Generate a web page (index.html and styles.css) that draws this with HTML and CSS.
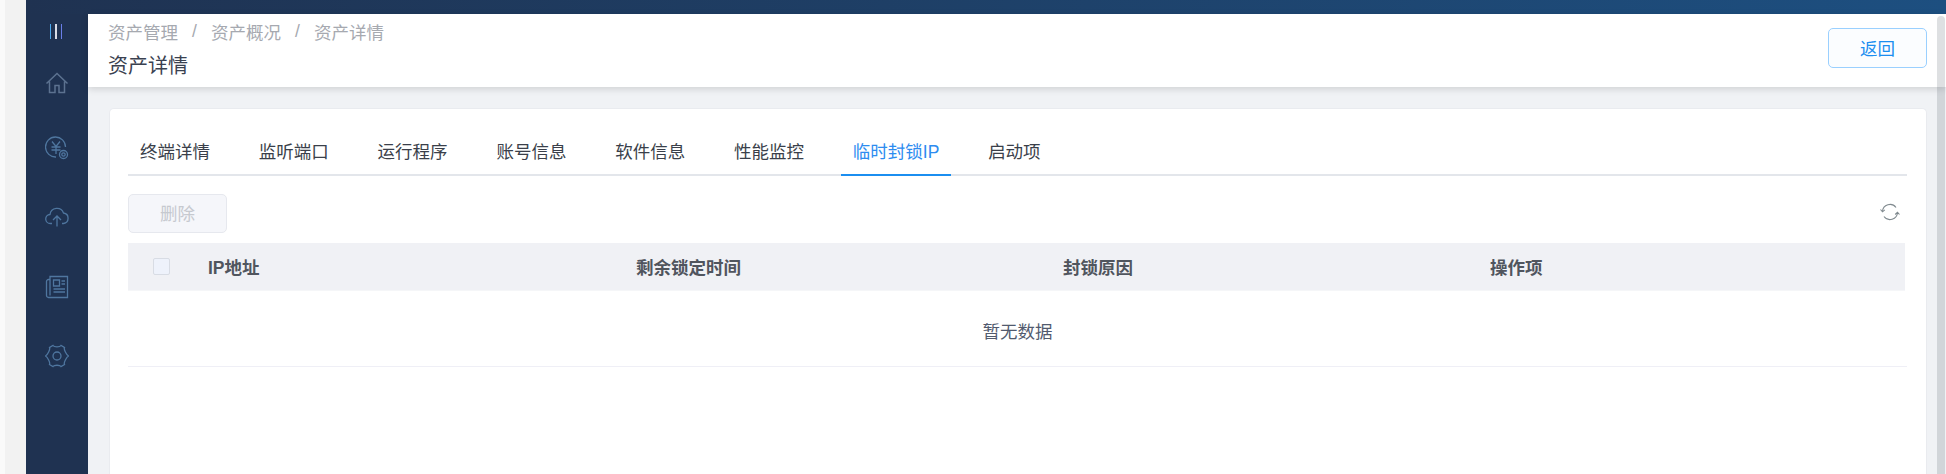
FILE: index.html
```html
<!DOCTYPE html>
<html lang="zh-CN">
<head>
<meta charset="utf-8">
<title>资产详情</title>
<link rel="stylesheet" href="styles.css">
</head>
<body>
<div class="shell">
  <div class="gutter"><div class="gutter-edge"></div><div class="gutter-fill"></div></div>
  <div class="frame">
    <div class="topbar"></div>
    <div class="workspace">
      <nav class="sidebar">
        <div class="menu-toggle"><span class="bar bar-a"></span><span class="bar bar-b"></span><span class="bar bar-c"></span></div>
        <div class="side-item side-item-first">
          <svg class="side-icon muted" viewBox="0 0 24 24"><path d="M1.500 12.500 12 2.500l10.500 10M4.500 10.500v11h5.500v-7h4v7h5.500v-11"/></svg>
        </div>
        <div class="side-item">
          <svg class="side-icon" viewBox="0 0 24 24"><path d="M20.500 11A10 10 0 1 0 11 21"/><path d="M7 5.500l4 5 4-5M6.500 11h9M6.500 14h9M11 10.500v7.500"/><circle cx="18.500" cy="18.500" r="4"/><circle cx="18.500" cy="18.500" r="1.700"/></svg>
        </div>
        <div class="side-item">
          <svg class="side-icon" viewBox="0 0 24 24"><path d="M7 18.500H5.500a4.500 4.500 0 0 1-.5-9A7 7 0 0 1 18.500 8a5.300 5.300 0 0 1 0 10.500H17"/><path d="M12 21.500V11.500M8 15l4-4 4 4"/></svg>
        </div>
        <div class="side-item">
          <svg class="side-icon" viewBox="0 0 24 24"><path d="M5 4.500V1.500h17.500v21H3.500a2 2 0 0 1-2-2V6.500a2 2 0 0 1 2-2H5v16"/><path d="M8.500 5h6v6h-6zM16.500 6h3.500M16.500 9h3.500M8.500 14h11.500M8.500 17h11.500"/></svg>
        </div>
        <div class="side-item">
          <svg class="side-icon" viewBox="0 0 24 24"><path d="M8 1.500c1 1.700 7 1.700 8 0l3.500 2c-1 1.800 2 7.500 4 8.500-2 1-5 6.700-4 8.500l-3.500 2c-1-1.700-7-1.700-8 0l-3.500-2c1-1.800-2-7.500-4-8.500 2-1 5-6.700 4-8.500z"/><circle cx="12" cy="12" r="4"/></svg>
        </div>
      </nav>
      <div class="content">
        <header class="page-header">
          <div class="page-heading">
            <div class="crumbs">
              <span>资产管理</span><span class="crumb-sep">/</span><span>资产概况</span><span class="crumb-sep">/</span><span>资产详情</span>
            </div>
            <div class="page-title">资产详情</div>
          </div>
          <button class="btn-back" type="button">返回</button>
        </header>
        <main class="page-body">
          <section class="card">
            <div class="tabs">
              <div class="tab">终端详情</div>
              <div class="tab">监听端口</div>
              <div class="tab">运行程序</div>
              <div class="tab">账号信息</div>
              <div class="tab">软件信息</div>
              <div class="tab">性能监控</div>
              <div class="tab tab-active">临时封锁IP</div>
              <div class="tab">启动项</div>
            </div>
            <div class="toolbar">
              <button class="btn-disabled" type="button">删除</button>
              <svg class="refresh" viewBox="0 0 20 20"><path d="M2.500 9.500A7.500 7.500 0 0 1 16 5.500M17.500 10.500A7.500 7.500 0 0 1 4 14.500"/><path d="M0.500 7.500l2 2.300 2.300-2M15.200 12.500l2.300-2.200 2 2.200"/></svg>
            </div>
            <div class="table-head">
              <div class="cell-check"><span class="checkbox"></span></div>
              <div class="cell">IP地址</div>
              <div class="cell">剩余锁定时间</div>
              <div class="cell">封锁原因</div>
              <div class="cell">操作项</div>
            </div>
            <div class="table-empty">暂无数据</div>
          </section>
        </main>
      </div>
    </div>
  </div>
</div>
<div class="scrollbar"></div>
</body>
</html>
```
FILE: styles.css
```css
* { box-sizing: border-box; }
html, body { margin: 0; height: 100%; overflow: hidden; background: #fff; }
body {
  font-family: "Liberation Sans", "Noto Sans CJK SC", sans-serif;
  font-size: 17.5px;
  color: #3a3f4a;
}
.shell { display: flex; height: 474px; }
.gutter { width: 26px; display: flex; flex: none; }
.gutter-edge { width: 5px; background: #fafafa; }
.gutter-fill { flex: 1; background: #f2f2f2; }
.frame { flex: 1; min-width: 0; display: flex; flex-direction: column; }
.topbar { height: 14px; flex: none; background: linear-gradient(90deg, #1f3251 0%, #1d4f80 100%); }
.workspace { flex: 1; display: flex; min-height: 0; }

.sidebar { width: 62px; flex: none; background: #1f3251; }
.menu-toggle { height: 39px; display: flex; justify-content: center; align-items: center; gap: 4px; padding: 0 2px 5px 0; }
.bar { width: 1.5px; height: 15px; }
.bar-a { background: #4aa8ee; }
.bar-b { background: #d8dce6; }
.bar-c { background: #6a7ee8; }
.side-item { height: 69.5px; display: flex; align-items: center; justify-content: center; }
.side-item-first { height: 60px; }
.side-icon { width: 24px; height: 24px; fill: none; stroke: #4f769f; stroke-width: 1.3; }
.side-icon.muted { stroke: #5c7290; stroke-width: 1.5; }

.content { flex: 1; min-width: 0; display: flex; flex-direction: column; background: #f0f2f5; position: relative; }
.page-header {
  height: 73px; flex: none; background: #fff;
  display: flex; align-items: center; justify-content: space-between;
  padding: 0 19px 0 20px;
  box-shadow: 0 2px 7px rgba(0, 0, 0, .14);
  position: relative;
}
.page-heading { align-self: flex-start; }
.crumbs { display: flex; height: 34px; align-items: center; color: #a6a9b0; }
.crumb-sep { width: 33px; text-align: center; }
.page-title { font-size: 20px; line-height: 30px; margin-top: 3px; color: #3a4150; }
.btn-back {
  width: 99px; height: 40px; margin-top: -6px;
  font: inherit; color: #1b8ef0;
  background: #fbfdff; border: 1px solid #9ad0ff; border-radius: 5px;
}

.page-body { flex: 1; min-height: 0; padding: 21px 19px 0 21px; overflow: hidden; }
.card {
  height: 100%; background: #fff;
  border: 1px solid #e9ebef; border-bottom: 0; border-radius: 5px 5px 0 0;
  padding: 19px 19px 0 18px;
}
.tabs { display: flex; gap: 24.800px; border-bottom: 2px solid #e3e6eb; height: 48px; }
.tab { height: 48px; padding: 0 12px; line-height: 49px; white-space: nowrap; border-bottom: 2px solid transparent; }
.tab-active { color: #2d8cf0; border-bottom-color: #1b8ef0; }

.toolbar { display: flex; justify-content: space-between; align-items: center; margin-top: 18px; height: 39px; }
.btn-disabled {
  width: 99px; height: 39px; padding: 0 0 2px; font: inherit; color: #c6c9cf;
  background: #f5f6fa; border: 1px solid #e6e8ee; border-radius: 5px;
}
.refresh { width: 20px; height: 20px; margin-right: 7px; margin-top: -3px; fill: none; stroke: #808a8f; stroke-width: 1.100; }

.table-head {
  margin-top: 10px; margin-right: 2px; height: 48px;
  display: grid; grid-template-columns: 65px 428px 427px 427px 1fr;
  align-items: center;
  background: #f0f1f5; border-bottom: 1px solid #f5f6f8;
  font-weight: 700; color: #50555e;
}
.cell { padding-left: 15px; }
.cell-check { display: flex; padding-left: 25px; }
.checkbox { width: 17px; height: 17px; background: #eef2fb; border: 1px solid #d8dce4; border-radius: 2px; }
.table-empty {
  height: 76px; padding-top: 4px; display: flex; align-items: center; justify-content: center;
  border-bottom: 1px solid #efeff6; color: #515a6e;
}

.scrollbar {
  position: absolute; top: 16px; right: 1px; bottom: 0; width: 8px;
  background: rgba(50, 62, 75, .16); border-radius: 4px 4px 0 0;
}
```
